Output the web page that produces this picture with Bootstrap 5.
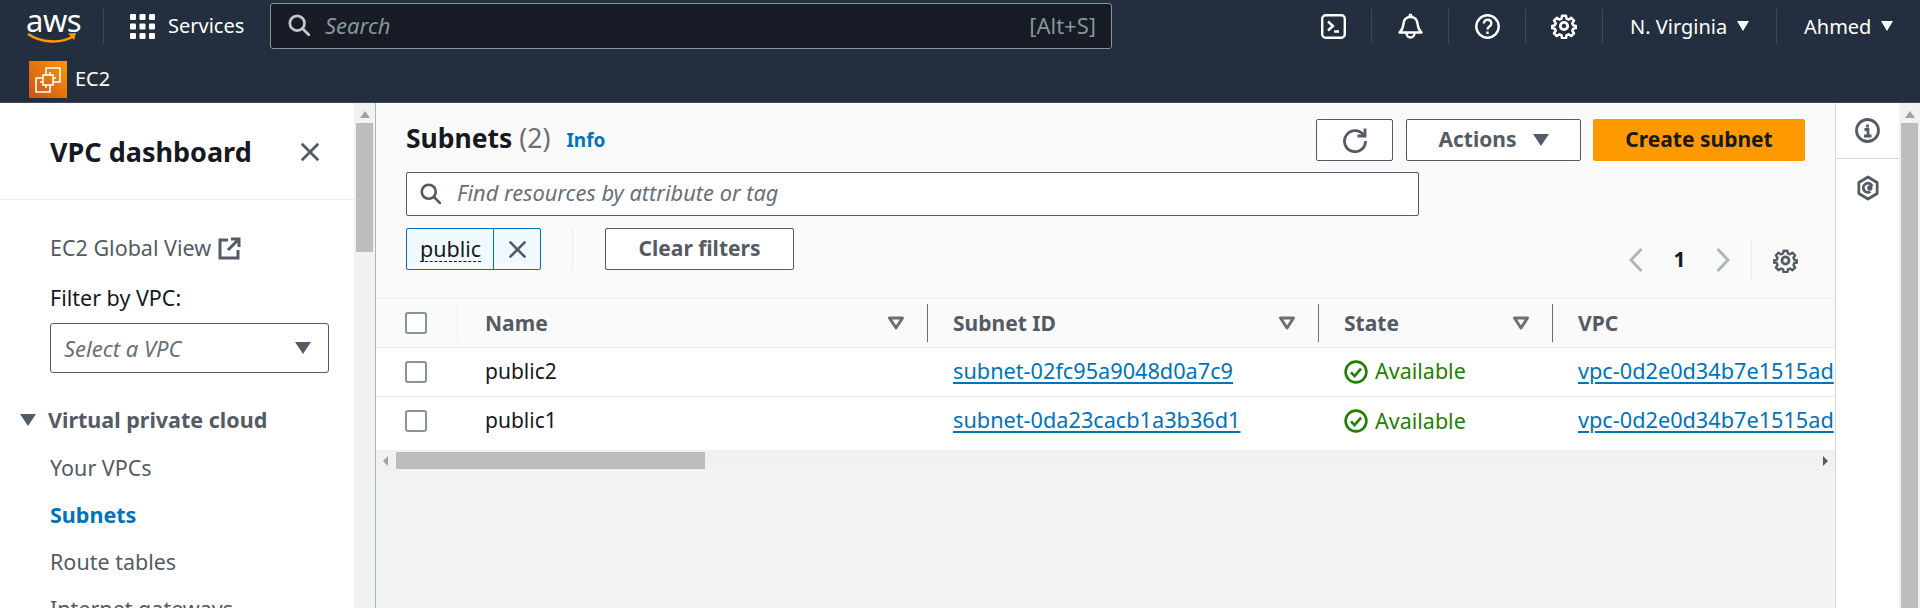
<!DOCTYPE html>
<html lang="en">
<head>
  <meta charset="UTF-8" />
  <title>Subnets | VPC Console</title>
  <link href="https://cdn.jsdelivr.net/npm/bootstrap@5.3.3/dist/css/bootstrap.min.css" rel="stylesheet"/>
  <style>
    html, body { height: 608px; overflow: hidden; }
    body { font-family: "Noto Sans", "Open Sans", sans-serif; font-size: 21.5px; color: #16191f; background: #fff; }

    /* top bar */
    .aws-head { background: #232f3e; height: 103px; border-bottom: 1px solid #414750; color: #fff; font-size: 20px; }
    .head-row { height: 52px; }
    .head-sub { height: 50px; padding: 9px 0 0 29px; }
    .logo-box { padding-left: 27px; width: 103px; height: 36px; }
    .logo-text { font-size: 31px; line-height: 24px; font-weight: 400; margin-left: -1px; letter-spacing: -.5px; }
    .head-div { width: 1px; height: 35px; background: #414750; flex: none; }
    .services { margin-left: 26px; width: 139px; gap: 13px; }
    .search-top { width: 842px; height: 46px; background: #161b25; border: 1px solid #879596; border-radius: 3px; padding: 0 15px 2px 17px; font-size: 22px; margin-left: 1px; }
    .search-top em { color: #879596; margin-left: 15px; }
    .search-top .keys { color: #879596; }
    .icon-cell { width: 76px; }
    .head-menu { gap: 10px; padding-left: 27px; }
    .head-menu span { margin-top: 2px; }
    .tri-w { width: 0; height: 0; border-left: 6.5px solid transparent; border-right: 6.5px solid transparent; border-top: 10px solid #fff; }
    .ec2-box { width: 38px; height: 37px; background: linear-gradient(45deg, #c8511b, #ff9900); }

    /* side nav */
    .page-body { height: 505px; }
    .side-nav { width: 354px; flex: none; overflow: hidden; color: #545b64; }
    .side-title { height: 97px; padding: 2px 33px 0 50px; border-bottom: 1px solid #eaeded; }
    .side-title h2 { font-size: 27px; font-weight: 700; color: #16191f; margin: 0; }
    .side-body { padding: 30px 25px 0 50px; }
    .side-link { line-height: 36px; height: 36px; gap: 7px; white-space: nowrap; }
    .side-label { color: #16191f; line-height: 36px; margin-top: 14px; margin-bottom: 7px; }
    .vpc-select { height: 50px; border: 1px solid #545b64; border-radius: 3px; padding: 0 17px 0 13px; }
    .vpc-select em { color: #687078; font-size: 22px; }
    .tri-d { width: 0; height: 0; border-left: 8px solid transparent; border-right: 8px solid transparent; border-top: 12px solid #545b64; }
    .nav-group { margin: 29px 0 0 -30px; font-weight: 700; gap: 12px; line-height: 36px; white-space: nowrap; }
    .nav-list { margin: 6px 0 0; padding: 0; list-style: none; }
    .nav-list li { height: 47px; line-height: 47px; white-space: nowrap; }
    .nav-list .on { color: #0073bb; font-weight: 700; }

    /* fake scrollbars */
    .track-v { width: 21px; flex: none; background: #f1f1f1; padding: 0 2px; }
    .arrow-up { width: 0; height: 0; margin: 8px auto 5px; border-left: 5px solid transparent; border-right: 5px solid transparent; border-bottom: 7px solid #a3a3a3; }
    .thumb-v { background: #bdbdbd; }
    .main-pane { width: 1461px; flex: none; background: #f2f3f3; border-left: 1px solid #aab7b8; border-right: 1px solid #d5dbdb; overflow: hidden; }

    /* subnets panel */
    .panel-top { background: #fafafa; height: 196px; padding: 16px 30px 0 30px; border-bottom: 1px solid #eaeded; }
    .panel-top h1 { font-size: 26.5px; font-weight: 700; margin: 0; }
    .panel-top h1 span { font-weight: 400; color: #687078; }
    .info-link { color: #0073bb; font-weight: 700; font-size: 19px; text-decoration: none; margin: 3px 0 0 16px; }
    .aws-btn { height: 42px; border: 1px solid #545b64; border-radius: 2px; background: #fff; color: #545b64; font-weight: 700; font-size: 21px; padding: 0; }
    .btn-refresh { width: 77px; margin-right: 13px; }
    .btn-actions { width: 175px; margin-right: 12px; gap: 16px; }
    .btn-create { width: 212px; background: #ff9900; border-color: #ff9900; color: #16191f; }
    .filter-box { width: 1013px; height: 44px; margin-top: 11px; background: #fff; border: 1px solid #545b64; border-radius: 2px; padding: 0 0 2px 13px; gap: 16px; }
    .filter-box em { color: #687078; font-size: 21.8px; }
    .token { width: 135px; height: 42px; background: #f1faff; border: 1px solid #0073bb; border-radius: 2px; }
    .token-txt { width: 87px; padding-left: 13px; border-right: 1px solid #0073bb; height: 100%; }
    .token-txt span { border-bottom: 1px dashed #16191f; line-height: 24px; }
    .token-x { flex: 1; }
    .vsep { width: 1px; height: 42px; background: #eaeded; margin: 0 32px 0 31px; flex: none; }
    .btn-clear { width: 189px; }
    .pager { height: 42px; margin-top: 11px; padding-right: 7px; }
    .pager b { font-weight: 700; width: 73px; text-align: center; font-size: 21px; }
    .pager .vsep { margin: 0 21px; }

    /* table */
    .res-table { table-layout: fixed; width: 1460px; margin: 0; font-size: 21px; }
    .res-table th, .res-table td { padding: 0; vertical-align: middle; border-bottom: 1px solid #eaeded; color: #16191f; box-shadow: none; }
    .res-table th { height: 48px; background: #fafafa; color: #545b64; font-weight: 700; }
    .res-table th span { margin-top: 2px; }
    .res-table td { height: 49px; background: #fff; }
    .res-table tr:last-child td { height: 54px; padding-bottom: 5px; border-bottom: 0; }
    .res-table a { color: #0073bb; font-size: 21.7px; text-decoration-thickness: 2px; text-underline-offset: 3px; white-space: nowrap; }
    .th-cell { height: 38px; border-right: 1px solid #687078; padding: 0 22px 0 0; margin-right: 25px; }
    .th-first { border-right-color: #eaeded; margin: 0; padding: 0; justify-content: flex-start; padding-left: 29px; }
    .check-box { width: 22px; height: 22px; margin: 0 0 0 29px; border: 2px solid #879596; border-radius: 3px; background: #fff; flex: none; }
    .th-first .check-box { margin: 0; }
    .state-ok { color: #1d8102; gap: 7px; font-size: 21.5px; }
    .clip { overflow: hidden; }

    .track-h { height: 21px; background: #f1f1f1; padding: 2px 0 2px 23px; }
    .thumb-h { width: 309px; height: 17px; background: #bdbdbd; }
    .arr-l { width: 0; height: 0; margin: 4px 8px 0 -16px; border-top: 5px solid transparent; border-bottom: 5px solid transparent; border-right: 5px solid #a3a3a3; }
    .arr-r { width: 0; height: 0; margin: 4px 7px 0 auto; border-top: 5px solid transparent; border-bottom: 5px solid transparent; border-left: 5px solid #545b64; }

    /* right tools */
    .tools { width: 63px; flex: none; background: #fff; }
    .tool-cell { height: 56px; border-bottom: 1px solid #d5dbdb; }
    .tool-two { height: 58px; }
  </style>
</head>
<body>

  <svg width="0" height="0" class="d-block position-absolute">
    <symbol id="ic-gear" viewBox="0 0 24 24">
      <path fill="none" stroke="currentColor" stroke-width="2.6" stroke-linejoin="round" d="M12 15.4a3.4 3.4 0 1 0 0-6.8 3.4 3.4 0 0 0 0 6.8z"/>
      <path fill="none" stroke="currentColor" stroke-width="2.6" stroke-linejoin="round" d="M10 1.5h4l.6 3 2.2.9 2.6-1.7 2.8 2.8-1.7 2.6.9 2.2 3 .6v2.2l-3 .6-.9 2.2 1.7 2.6-2.8 2.8-2.6-1.7-2.2.9-.6 3h-4l-.6-3-2.2-.9-2.6 1.7-2.8-2.8 1.7-2.6-.9-2.2-3-.6v-2.2l3-.6.9-2.2-1.7-2.6 2.8-2.8 2.6 1.7 2.2-.9z" transform="translate(1.2 1.2) scale(.9)"/>
    </symbol>
    <symbol id="ic-search" viewBox="0 0 24 24">
      <circle cx="10" cy="10" r="8" fill="none" stroke="currentColor" stroke-width="3"/>
      <path d="M16 16l7 7" stroke="currentColor" stroke-width="3" stroke-linecap="round"/>
    </symbol>
    <symbol id="ic-x" viewBox="0 0 24 24">
      <path d="M3 3l18 18M21 3L3 21" stroke="currentColor" stroke-width="3" fill="none"/>
    </symbol>
    <symbol id="ic-ok" viewBox="0 0 24 24">
      <circle cx="12" cy="12" r="10.4" fill="none" stroke="currentColor" stroke-width="2.6"/>
      <path d="M7 12.4l3.6 3.6L17 8.6" fill="none" stroke="currentColor" stroke-width="2.6"/>
    </symbol>
    <symbol id="ic-filter" viewBox="0 0 18 14">
      <path d="M2.5 2h13L9 12z" fill="none" stroke="currentColor" stroke-width="3" stroke-linejoin="round"/>
    </symbol>
  </svg>

  <header class="aws-head">
    <div class="head-row d-flex align-items-center">
      <div class="logo-box d-flex flex-column flex-none">
        <span class="logo-text">aws</span>
        <svg width="50" height="12" viewBox="0 0 50 12" class="d-block">
          <path d="M1 2c13 9 33 10 46 2" fill="none" stroke="#ff9900" stroke-width="2.6"/>
          <path d="M41 1.5l8-.5-2 7z" fill="#ff9900"/>
        </svg>
      </div>
      <div class="head-div"></div>
      <div class="services d-flex align-items-center">
        <svg width="25" height="25" viewBox="0 0 25 25" fill="#fff" class="flex-shrink-0">
          <rect width="6" height="6" rx="1"/><rect x="9.5" width="6" height="6" rx="1"/><rect x="19" width="6" height="6" rx="1"/>
          <rect y="9.5" width="6" height="6" rx="1"/><rect x="9.5" y="9.5" width="6" height="6" rx="1"/><rect x="19" y="9.5" width="6" height="6" rx="1"/>
          <rect y="19" width="6" height="6" rx="1"/><rect x="9.5" y="19" width="6" height="6" rx="1"/><rect x="19" y="19" width="6" height="6" rx="1"/>
        </svg>
        <span>Services</span>
      </div>
      <div class="search-top d-flex align-items-center flex-shrink-0">
        <svg width="22" height="22" class="text-white opacity-75 flex-shrink-0"><use href="#ic-search"/></svg>
        <em>Search</em>
        <span class="keys ms-auto">[Alt+S]</span>
      </div>

      <div class="d-flex align-items-center ms-auto">
        <div class="icon-cell text-center">
          <svg width="25" height="25" viewBox="0 0 25 25" class="d-block mx-auto" fill="none" stroke="#fff" stroke-width="2.4">
            <rect x="1.2" y="1.2" width="22.6" height="22.6" rx="3.5"/>
            <path d="M7 7.5l5 4.5-5 4.5M13 17.5h5"/>
          </svg>
        </div>
        <div class="head-div"></div>
        <div class="icon-cell text-center">
          <svg width="25" height="26" viewBox="0 0 25 26" class="d-block mx-auto" fill="none" stroke="#fff" stroke-width="2.4" stroke-linejoin="round">
            <path d="M1.5 19.5c3-2.5 3.5-5 4-9 .5-4 3-6.5 7-6.5s6.500 2.500 7 6.500c.5 4 1 6.500 4 9z"/>
            <circle cx="12.500" cy="2.600" r=".8"/>
            <path d="M8.500 20c0 6 8 6 8 0"/>
          </svg>
        </div>
        <div class="head-div"></div>
        <div class="icon-cell text-center">
          <svg width="25" height="25" viewBox="0 0 25 25" class="d-block mx-auto" fill="none" stroke="#fff" stroke-width="2.4">
            <circle cx="12.500" cy="12.500" r="11.200"/>
            <path d="M8.800 9.500c0-5 7.500-5 7.500 0 0 3-3.800 3-3.800 6"/>
            <path d="M12.500 17.500v2.600"/>
          </svg>
        </div>
        <div class="head-div"></div>
        <div class="icon-cell text-center">
          <svg width="26" height="26" class="d-block mx-auto text-white"><use href="#ic-gear"/></svg>
        </div>
        <div class="head-div"></div>
        <div class="head-menu d-flex align-items-center" style="width:173px"><span>N. Virginia</span><i class="tri-w"></i></div>
        <div class="head-div"></div>
        <div class="head-menu d-flex align-items-center" style="width:143px"><span>Ahmed</span><i class="tri-w"></i></div>
      </div>
    </div>
    <div class="head-sub d-flex align-items-start">
      <div class="ec2-box d-flex align-items-center justify-content-center">
        <svg width="28" height="28" viewBox="0 0 28 28" fill="none" stroke="#fff" stroke-width="1.600">
          <path d="M12 6V2h14v14h-4"/>
          <path d="M6 12H2v14h14v-4"/>
          <rect x="9" y="9" width="10" height="10"/>
          <path d="M12 9V6M16 9V6M12 22v-3M16 22v-3M9 12H6M9 16H6M22 12h-3M22 16h-3"/>
        </svg>
      </div>
      <span class="ms-2 lh-base" style="margin-top:3px">EC2</span>
    </div>
  </header>

  <div class="page-body d-flex">
    <nav class="side-nav">
      <div class="side-title d-flex align-items-center justify-content-between">
        <h2>VPC dashboard</h2>
        <svg width="22" height="22" class="flex-shrink-0" style="color:#545b64"><use href="#ic-x"/></svg>
      </div>
      <div class="side-body">
        <div class="side-link d-flex align-items-center">
          <span>EC2 Global View</span>
          <svg width="23" height="23" viewBox="0 0 23 23" fill="none" stroke="#545b64" stroke-width="3" class="flex-shrink-0">
            <path d="M10 3H2v18h18v-8M13 2h8v8M21 2L10 13"/>
          </svg>
        </div>
        <div class="side-label">Filter by VPC:</div>
        <div class="vpc-select d-flex align-items-center justify-content-between">
          <em>Select a VPC</em><i class="tri-d"></i>
        </div>
        <div class="nav-group d-flex align-items-center"><i class="tri-d"></i><span>Virtual private cloud</span></div>
        <ul class="nav-list">
          <li>Your VPCs</li>
          <li class="on">Subnets</li>
          <li>Route tables</li>
          <li>Internet gateways</li>
        </ul>
      </div>
    </nav>
    <div class="track-v"><div class="arrow-up"></div><div class="thumb-v" style="height:129px"></div></div>

    <main class="main-pane">
      <div class="panel-top">
        <div class="d-flex align-items-start">
          <div class="d-flex align-items-center" style="height:40px">
            <h1>Subnets <span>(2)</span></h1><a href="#" class="info-link">Info</a>
          </div>
          <div class="d-flex ms-auto">
            <button class="btn aws-btn btn-refresh d-flex align-items-center justify-content-center">
              <svg width="26" height="26" viewBox="0 0 26 26" fill="none" stroke="#545b64" stroke-width="2.800">
                <path d="M21.500 8A10.500 10.500 0 1 0 23.500 14"/>
                <path d="M23 1.500V9h-7.500" stroke-linejoin="miter"/>
              </svg>
            </button>
            <button class="btn aws-btn btn-actions d-flex align-items-center justify-content-center">Actions <i class="tri-d"></i></button>
            <button class="btn aws-btn btn-create">Create subnet</button>
          </div>
        </div>
        <div class="filter-box d-flex align-items-center">
          <svg width="21" height="21" class="flex-shrink-0" style="color:#545b64"><use href="#ic-search"/></svg>
          <em>Find resources by attribute or tag</em>
        </div>
        <div class="d-flex align-items-start" style="margin-top:12px">
          <div class="token d-flex align-items-center">
            <div class="token-txt d-flex align-items-center"><span>public</span></div>
            <div class="token-x d-flex align-items-center justify-content-center">
              <svg width="21" height="21" style="color:#545b64"><use href="#ic-x"/></svg>
            </div>
          </div>
          <div class="vsep"></div>
          <button class="btn aws-btn btn-clear">Clear filters</button>
          <div class="pager d-flex align-items-center ms-auto">
            <svg width="14" height="26" viewBox="0 0 14 26" fill="none" stroke="#aab7b8" stroke-width="2.800"><path d="M12.500 2L2 13l10.500 11"/></svg>
            <b>1</b>
            <svg width="14" height="26" viewBox="0 0 14 26" fill="none" stroke="#aab7b8" stroke-width="2.800"><path d="M1.500 2L12 13 1.500 24"/></svg>
            <div class="vsep"></div>
            <svg width="25" height="25" style="color:#545b64"><use href="#ic-gear"/></svg>
          </div>
        </div>
      </div>

      <table class="table res-table">
        <colgroup><col style="width:82px"><col style="width:495px"><col style="width:391px"><col style="width:234px"><col></colgroup>
        <thead>
          <tr>
            <th><div class="th-cell th-first d-flex align-items-center"><span class="check-box"></span></div></th>
            <th><div class="th-cell d-flex align-items-center justify-content-between" style="margin-left:27px"><span>Name</span><svg width="18" height="14" style="color:#687078"><use href="#ic-filter"/></svg></div></th>
            <th><div class="th-cell d-flex align-items-center justify-content-between"><span>Subnet ID</span><svg width="18" height="14" style="color:#687078"><use href="#ic-filter"/></svg></div></th>
            <th><div class="th-cell d-flex align-items-center justify-content-between"><span>State</span><svg width="18" height="14" style="color:#687078"><use href="#ic-filter"/></svg></div></th>
            <th><span class="d-block">VPC</span></th>
          </tr>
        </thead>
        <tbody>
          <tr>
            <td><span class="check-box d-block"></span></td>
            <td><div style="margin-left:27px">public2</div></td>
            <td><a href="#">subnet-02fc95a9048d0a7c9</a></td>
            <td><div class="state-ok d-flex align-items-center"><svg width="24" height="24" class="flex-shrink-0"><use href="#ic-ok"/></svg><span>Available</span></div></td>
            <td class="clip"><a href="#">vpc-0d2e0d34b7e1515ad</a></td>
          </tr>
          <tr>
            <td><span class="check-box d-block"></span></td>
            <td><div style="margin-left:27px">public1</div></td>
            <td><a href="#">subnet-0da23cacb1a3b36d1</a></td>
            <td><div class="state-ok d-flex align-items-center"><svg width="24" height="24" class="flex-shrink-0"><use href="#ic-ok"/></svg><span>Available</span></div></td>
            <td class="clip"><a href="#">vpc-0d2e0d34b7e1515ad</a></td>
          </tr>
        </tbody>
      </table>
      <div class="track-h d-flex"><i class="arr-l"></i><div class="thumb-h"></div><i class="arr-r"></i></div>
    </main>

    <aside class="tools">
      <div class="tool-cell d-flex align-items-center justify-content-center">
        <svg width="25" height="25" viewBox="0 0 25 25" fill="none" stroke="#545b64" stroke-width="2.800">
          <circle cx="12.500" cy="12.500" r="11"/>
          <path d="M12.500 6.500v3M9.500 11.500h3.500v6M9 18h7.500"/>
        </svg>
      </div>
      <div class="tool-two d-flex align-items-center justify-content-center">
        <svg width="22" height="28" viewBox="0 0 24 28" fill="none" stroke="#545b64" stroke-width="3">
          <path d="M12 2l10 6v12l-10 6-10-6V8z" stroke-linejoin="round"/>
          <path d="M16.500 12a5 5 0 1 0-2 6"/>
          <circle cx="14" cy="14" r="1.400" fill="#545b64"/>
        </svg>
      </div>
    </aside>
    <div class="track-v"><div class="arrow-up"></div><div class="thumb-v" style="height:500px"></div></div>
  </div>

</body>
</html>
